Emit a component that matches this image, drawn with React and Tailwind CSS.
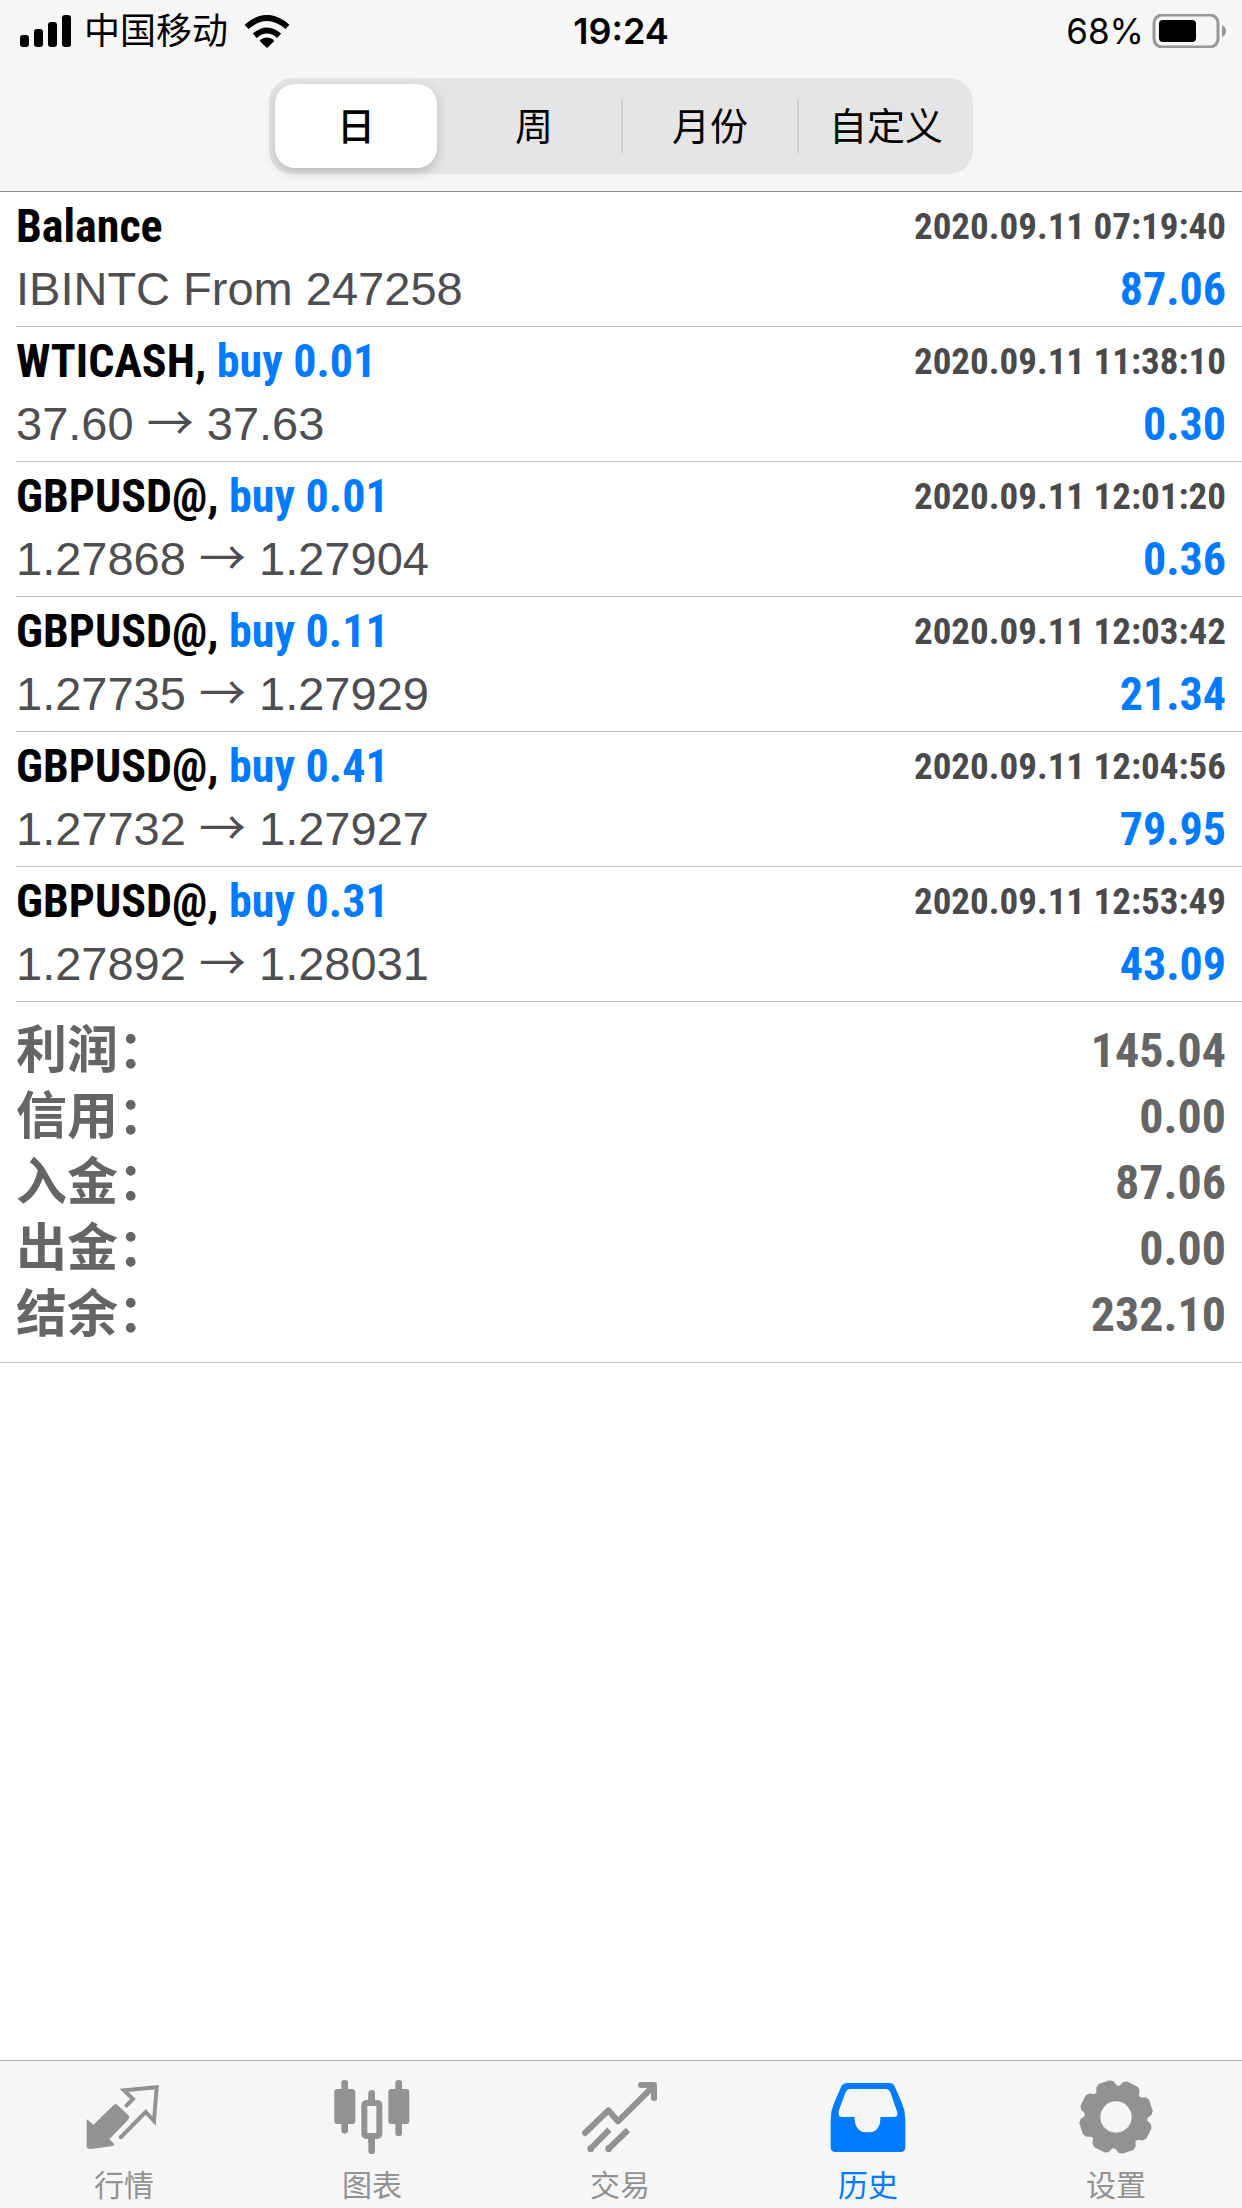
import { useState } from "react";
import clsx from "clsx";

const ranges = ["日", "周", "月份", "自定义"];

const deals = [
  { symbol: "Balance", detail: "IBINTC From 247258", time: "2020.09.11 07:19:40", profit: "87.06" },
  { symbol: "WTICASH", side: "buy 0.01", open: "37.60", close: "37.63", time: "2020.09.11 11:38:10", profit: "0.30" },
  { symbol: "GBPUSD@", side: "buy 0.01", open: "1.27868", close: "1.27904", time: "2020.09.11 12:01:20", profit: "0.36" },
  { symbol: "GBPUSD@", side: "buy 0.11", open: "1.27735", close: "1.27929", time: "2020.09.11 12:03:42", profit: "21.34" },
  { symbol: "GBPUSD@", side: "buy 0.41", open: "1.27732", close: "1.27927", time: "2020.09.11 12:04:56", profit: "79.95" },
  { symbol: "GBPUSD@", side: "buy 0.31", open: "1.27892", close: "1.28031", time: "2020.09.11 12:53:49", profit: "43.09" },
];

const totals = [
  ["利润", "145.04"],
  ["信用", "0.00"],
  ["入金", "87.06"],
  ["出金", "0.00"],
  ["结余", "232.10"],
];

const narrow = "font-['Roboto_Condensed','Liberation_Sans',sans-serif] font-bold";
const cjk = "font-['Liberation_Sans','Noto_Sans_CJK_SC',sans-serif]";

// eight teeth, points listed clockwise from the top notch
const gearPoints = Array.from({ length: 8 }, (_, i) => i * 45 - 86)
  .flatMap((a) => [
    [a - 4, 90],
    [a + 4, 90],
    [a + 9, 103],
    [a + 14, 107],
    [a + 31, 107],
    [a + 36, 103],
  ])
  .map(([deg, r]) => {
    const rad = (deg * Math.PI) / 180;
    return `${(114 + r * Math.cos(rad)).toFixed(1)},${(114 + r * Math.sin(rad)).toFixed(1)}`;
  })
  .join(" ");

function QuotesIcon() {
  return (
    <svg viewBox="0 0 228 228" className="size-[76px]" fill="currentColor">
      <path d="M2 124q0-4 4-1l16 14 62-60q5-4 10 0l33 32q6 6 1 12l-58 60 13 12q4 5-2 8l-66 9q-12 1-13-8z" />
      <path
        d="M118 83l23-23-27-26 98-9-8 101-25-27-75 76"
        fill="none"
        stroke="currentColor"
        strokeWidth="12"
      />
      <circle cx="104" cy="175" r="6" />
    </svg>
  );
}

function ChartIcon() {
  return (
    <svg viewBox="0 0 228 228" className="size-[76px]" fill="currentColor">
      <rect x="22" y="3" width="20" height="161" rx="10" />
      <rect x="1" y="30" width="63" height="105" rx="9" />
      <rect x="184" y="3" width="20" height="168" rx="10" />
      <rect x="163" y="30" width="63" height="105" rx="9" />
      <rect x="103" y="33" width="20" height="40" rx="10" />
      <rect x="103" y="175" width="20" height="50" rx="10" />
      <rect x="103" y="50" width="20" height="20" />
      <rect x="103" y="172" width="20" height="20" />
      <rect x="91" y="72" width="45" height="99" rx="6" fill="none" stroke="currentColor" strokeWidth="18" />
    </svg>
  );
}

function TradeIcon() {
  return (
    <svg
      viewBox="0 0 228 228"
      className="size-[76px]"
      fill="none"
      stroke="currentColor"
      strokeWidth="18"
      strokeLinejoin="round"
    >
      <path d="M9 162l70-68 29 33L212 24" strokeLinecap="round" />
      <path d="M177 18h39v39" strokeLinecap="round" />
      <path d="M25 210l57-58M79 210l59-57" />
      <g fill="currentColor" stroke="none">
        <circle cx="26" cy="209" r="10" />
        <circle cx="80" cy="209" r="10" />
      </g>
    </svg>
  );
}

function HistoryIcon() {
  return (
    <svg viewBox="0 0 228 228" className="size-[76px]" fill="currentColor">
      <path
        fillRule="evenodd"
        d="M53 12H177q12 0 17 10l22 51q10 24 10 46v86q0 14-14 14H16q-14 0-14-14v-86q0-22 10-46l22-51q6-10 19-10zM62 30q-11 0-15 10L26 96v10q1 8 9 8h39v8q3 38 39 38t38-38v-8h42q9 0 9-8v-6L181 40q-4-10-15-10z"
      />
    </svg>
  );
}

function SettingsIcon() {
  return (
    <svg viewBox="0 0 228 228" className="size-[76px]">
      <mask id="gear-hole">
        <rect width="228" height="228" fill="white" />
        <circle cx="114" cy="114" r="47" fill="black" />
      </mask>
      <polygon
        points={gearPoints}
        fill="currentColor"
        stroke="currentColor"
        strokeWidth="9"
        strokeLinejoin="round"
        mask="url(#gear-hole)"
      />
    </svg>
  );
}

const tabs = [
  { label: "行情", icon: <QuotesIcon /> },
  { label: "图表", icon: <ChartIcon /> },
  { label: "交易", icon: <TradeIcon /> },
  { label: "历史", icon: <HistoryIcon /> },
  { label: "设置", icon: <SettingsIcon /> },
];

function StatusBar() {
  return (
    <div className="grid h-[62px] grid-cols-3 items-center px-4 text-black">
      <div className="flex items-center gap-3 pl-1">
        <svg viewBox="0 0 52 32" className="h-8 w-[52px]">
          <rect x="0" y="20" width="9" height="12" rx="3" />
          <rect x="14" y="14" width="9" height="18" rx="3" />
          <rect x="28" y="7" width="9" height="25" rx="3" />
          <rect x="42" y="0" width="9" height="32" rx="3" />
        </svg>
        <span className={clsx(cjk, "pt-[2px] pr-1 text-4xl")}>中国移动</span>
        <svg viewBox="0 0 138 100" className="h-[33px] w-[46px]">
          <path d="M69 100L49 81q-3-4 1-7 19-11 38 0 4 3 1 7z" />
          <g fill="none" stroke="black" strokeWidth="18">
            <path d="M7 36Q69-18 131 36" />
            <path d="M32 63q37-32 74 0" />
          </g>
        </svg>
      </div>
      <div className="text-center font-['Inter',sans-serif] text-4xl font-semibold">19:24</div>
      <div className="flex items-center justify-end gap-2">
        <span className="font-['Inter',sans-serif] text-[35px]">68%</span>
        <svg viewBox="0 0 74 34" className="h-[34px] w-[74px]">
          <rect x="2" y="1" width="64" height="32" rx="8" fill="none" stroke="#98989a" strokeWidth="3" />
          <rect x="7" y="6" width="37" height="22" rx="4" />
          <path d="M70 11q4 2 4 6t-4 6z" fill="#98989a" />
        </svg>
      </div>
    </div>
  );
}

function DealRow({ deal }) {
  return (
    <li className="border-b border-[#c0c0c2] pt-[3px] pr-4 pb-[5px]">
      <div className={clsx(narrow, "flex h-[63px] items-center justify-between")}>
        <span className="text-[46px] text-black">
          {deal.symbol}
          {deal.side && (
            <>
              , <span className="text-[#007aff]">{deal.side}</span>
            </>
          )}
        </span>
        <time className="text-[37px] text-[#4a4a4d]">{deal.time}</time>
      </div>
      <div className="flex h-[63px] items-center justify-between">
        <span className="font-['Liberation_Sans',sans-serif] text-[47px] text-[#4e4e51]">
          {deal.detail || (
            <>
              {deal.open}{" "}
              <span className="font-['Noto_Sans_CJK_SC',sans-serif] leading-none">→</span>{" "}
              {deal.close}
            </>
          )}
        </span>
        <span className={clsx(narrow, "text-[46px] text-[#007aff]")}>{deal.profit}</span>
      </div>
    </li>
  );
}

export default function App() {
  const [range, setRange] = useState("日");
  const [tab, setTab] = useState("历史");

  return (
    <div lang="zh-CN" className="flex min-h-screen flex-col bg-white">
      <header className="border-b border-[#8e8e90] bg-[#f6f6f6] pb-[17px]">
        <StatusBar />
        <div className="mx-auto mt-4 grid h-24 w-[704px] grid-cols-4 rounded-[24px] bg-[#e5e5e7]">
          {ranges.map((item, i) => (
            <div key={item} className="flex items-center">
              <span className={clsx("h-[54px] w-[2px]", i > 1 && "bg-[#d0d0d3]")} />
              <button
                type="button"
                aria-pressed={range === item}
                onClick={() => setRange(item)}
                className={clsx(
                  cjk,
                  "h-[84px] flex-1 pt-[2px] text-center text-[38px] text-black",
                  range === item &&
                    "mr-2 ml-1 rounded-[20px] bg-white font-medium shadow-[0_4px_12px_rgba(0,0,0,0.2)]"
                )}
              >
                {item}
              </button>
            </div>
          ))}
        </div>
      </header>

      <main className="flex-1">
        <ul className="pl-4">
          {deals.map((deal) => (
            <DealRow key={deal.time} deal={deal} />
          ))}
        </ul>
        <dl className="border-b border-[#c0c0c2] px-4 pt-4 pb-[14px] text-[#656565]">
          {totals.map(([label, value]) => (
            <div key={label} className="flex h-[66px] items-center justify-between">
              <dt className={clsx(cjk, "text-[51px] leading-[66px] font-bold")}>{label}：</dt>
              <dd className={clsx(narrow, "text-5xl leading-[66px]")}>{value}</dd>
            </div>
          ))}
        </dl>
      </main>

      <nav className="grid grid-cols-5 border-t border-[#b2b2b2] bg-[#f6f6f6] pt-[18px] pr-[2px]">
        {tabs.map(({ label, icon }) => (
          <button
            key={label}
            type="button"
            onClick={() => setTab(label)}
            className={clsx(
              "flex flex-col items-center gap-2",
              tab === label ? "text-[#007aff]" : "text-[#929292]"
            )}
          >
            {icon}
            <span className={clsx(cjk, "text-[30px] leading-[45px]")}>{label}</span>
          </button>
        ))}
      </nav>
    </div>
  );
}
